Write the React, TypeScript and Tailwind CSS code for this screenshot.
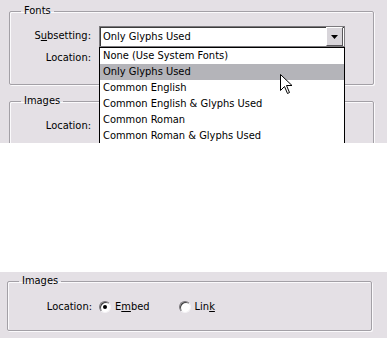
import React from 'react';

const font = { fontFamily: '"DejaVu Sans Condensed", "Liberation Sans", Arial, sans-serif' };

function GroupBox({ title, children, className }: { title: string; children: React.ReactNode; className?: string }) {
  return (
    <fieldset className={`border border-[#a3a0a6] shadow-[inset_1px_1px_0_#fbfafc,1px_1px_0_#fbfafc] rounded-[2px] px-0 m-0 ${className ?? ''}`}>
      <legend className="ml-[11px] px-[3px] text-[11px] leading-[14px] text-black">{title}</legend>
      {children}
    </fieldset>
  );
}

function Radio({ checked }: { checked?: boolean }) {
  return (
    <span className="relative inline-flex w-[12px] h-[12px] rounded-full bg-white border border-t-[#7a777c] border-l-[#7a777c] border-b-[#f4f2f5] border-r-[#f4f2f5] shadow-[inset_1px_1px_0_#404040] items-center justify-center">
      {checked && <span className="w-[4px] h-[4px] rounded-full bg-black" />}
    </span>
  );
}

const items = [
  'None (Use System Fonts)',
  'Only Glyphs Used',
  'Common English',
  'Common English & Glyphs Used',
  'Common Roman',
  'Common Roman & Glyphs Used',
];

export default function App() {
  return (
    <div className="w-[387px] h-[338px] bg-white flex flex-col text-black" style={font}>
      {/* top capture: open combo box */}
      <div className="relative h-[143px] bg-[#e4e0e5] pt-[4px] pl-[9px] pr-[13px] overflow-hidden">
        <GroupBox title="Fonts" className="h-[81px]">
          <div className="grid grid-cols-[81px_1fr] gap-x-[8px] items-center pt-[8px] text-[11px]">
            <span className="text-right">S<span className="underline">u</span>bsetting:</span>
            <div className="w-[246px] h-[21px] bg-white border border-[#7c7a7e] shadow-[inset_1px_1px_0_#3c3c3c] flex items-center">
              <span className="flex-1 pl-[3px] leading-[14px]">Only Glyphs Used</span>
              <span className="w-[17px] h-[19px] mr-[1px] bg-[#d8d5da] border border-t-white border-l-white border-r-[#5a585c] border-b-[#5a585c] flex items-center justify-center">
                <svg width="7" height="4" viewBox="0 0 7 4"><path d="M0 0h7L3.5 4z" fill="#000" /></svg>
              </span>
            </div>
            <span className="text-right mt-[3px]">Location:</span>
            <span />
          </div>
        </GroupBox>
        <GroupBox title="Images" className="mt-[9px] h-[80px]">
          <div className="grid grid-cols-[81px_1fr] gap-x-[8px] pt-[10px] text-[11px]">
            <span className="text-right">Location:</span>
          </div>
        </GroupBox>

        {/* dropdown list */}
        <div className="absolute left-[99px] top-[47px] w-[246px] bg-white border border-black text-[11px]">
          {items.map((it, i) => (
            <div
              key={it}
              className={`h-[16px] leading-[16px] pl-[3px] ${i === 1 ? 'bg-[#b4b4b9]' : ''}`}
            >
              {it}
            </div>
          ))}
        </div>

        {/* mouse pointer */}
        <svg className="absolute left-[280px] top-[74px]" width="13" height="21" viewBox="0 0 13 21">
          <path d="M0.5 0.5 V16.5 L4.5 12.5 L7.5 19.5 L9.5 18.5 L6.5 11.5 H12 Z" fill="#fff" stroke="#000" strokeWidth="1" strokeLinejoin="round" />
        </svg>
      </div>

      <div className="h-[129px] bg-white" />

      {/* bottom capture */}
      <div className="h-[66px] bg-[#e4e0e5] pt-[2px] pl-[7px] pr-[15px]">
        <GroupBox title="Images" className="h-[57px]">
          <div className="flex items-center pt-[11px] text-[11px]">
            <span className="w-[84px] text-right">Location:</span>
            <span className="ml-[7px] flex items-center">
              <Radio checked />
              <span className="ml-[4px]">E<span className="underline">m</span>bed</span>
            </span>
            <span className="ml-[29px] flex items-center">
              <Radio />
              <span className="ml-[4px]">Lin<span className="underline">k</span></span>
            </span>
          </div>
        </GroupBox>
      </div>
    </div>
  );
}
